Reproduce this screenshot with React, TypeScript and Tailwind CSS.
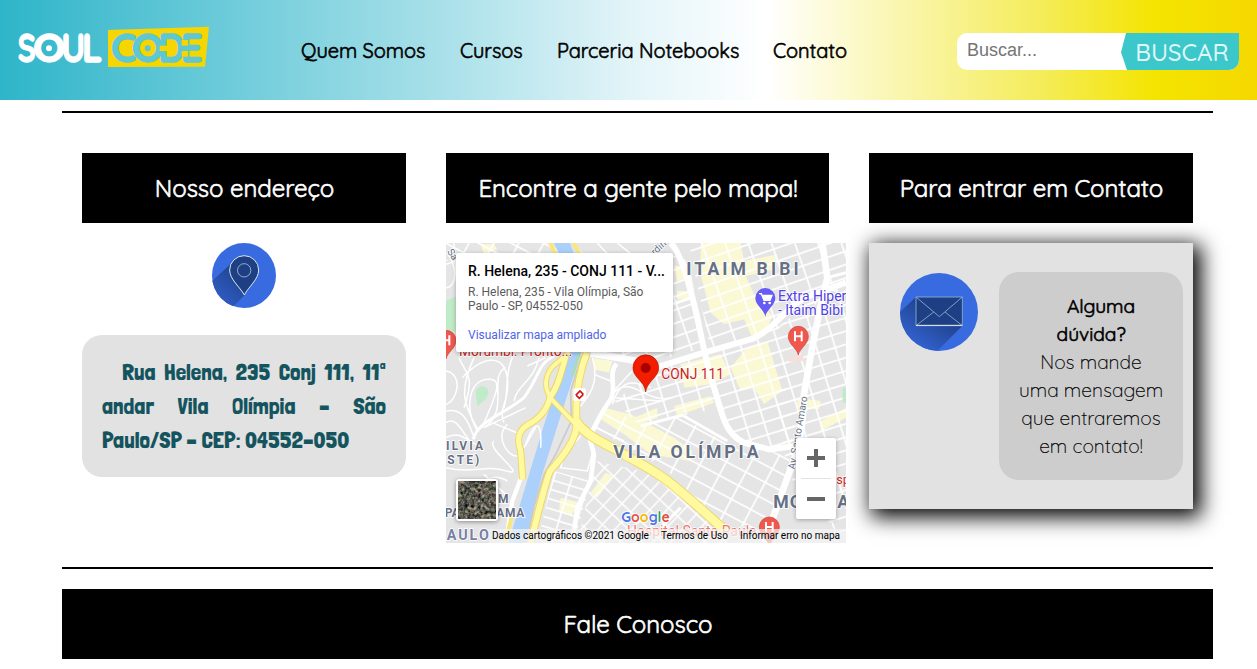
import React from "react";

const quick = "font-['Quicksand','Inter',sans-serif]";
const thick = "font-normal tracking-[-0.06px] [-webkit-text-stroke:0.6px_currentColor]";

function Logo() {
  return (
    <svg className="block h-[54px] w-[200px]" viewBox="0 0 600 162" fontFamily="Quicksand, Inter, sans-serif" fontWeight="700" fontSize="118">
      <g fill="#fff" stroke="#fff" strokeWidth="4">
        <text x="11" y="125" textLength="54" lengthAdjust="spacingAndGlyphs">S</text>
        <text x="57" y="125" textLength="97" lengthAdjust="spacingAndGlyphs">O</text>
        <text x="142" y="125" textLength="72" lengthAdjust="spacingAndGlyphs">U</text>
        <text x="204" y="125" textLength="61" lengthAdjust="spacingAndGlyphs">L</text>
        <circle cx="105" cy="85" r="7" />
      </g>
      <polygon points="282,30 585,20 573,140 282,141" fill="#f6d500" />
      <g fill="#5fc6d4" stroke="#5fc6d4" strokeWidth="4">
        <text x="291" y="125" textLength="76" lengthAdjust="spacingAndGlyphs">C</text>
        <text x="353" y="125" textLength="96" lengthAdjust="spacingAndGlyphs">O</text>
        <text x="433" y="125" textLength="80" lengthAdjust="spacingAndGlyphs">D</text>
        <text x="500" y="125" textLength="66" lengthAdjust="spacingAndGlyphs">E</text>
        <circle cx="401" cy="85" r="7" />
      </g>
      <g fill="#f6d500">
        <rect x="437" y="77" width="22" height="16" />
        <rect x="503" y="60" width="19" height="17" />
        <rect x="503" y="93" width="19" height="17" />
      </g>
    </svg>
  );
}

function PinIcon() {
  return (
    <svg className="block h-[65px] w-[64px]" viewBox="0 0 192 195">
      <defs>
        <clipPath id="pinClip"><ellipse cx="96" cy="97.5" rx="96" ry="97.5" /></clipPath>
        <linearGradient id="pinShade" gradientUnits="userSpaceOnUse" x1="105" y1="75" x2="30" y2="160">
          <stop offset="0" stopColor="#1f3f84" /><stop offset="1" stopColor="#2d59bd" />
        </linearGradient>
      </defs>
      <g clipPath="url(#pinClip)">
        <rect width="192" height="195" fill="#386ae0" />
        <path d="M62 58L-20 132L40 215L97 157L130 110V70Z" fill="url(#pinShade)" />
        <path d="M97 156C84 132 53 109 53 81A43.500 43 0 0 1 140 81C140 109 109 132 97 156Z" fill="#1f3f84" stroke="#d7e9ef" strokeWidth="3" />
        <circle cx="96.500" cy="82" r="20" fill="none" stroke="#a6c3dc" strokeWidth="2.500" />
      </g>
    </svg>
  );
}

function MailIcon() {
  return (
    <svg className="block size-[78px]" viewBox="0 0 234 234">
      <defs>
        <clipPath id="mailClip"><circle cx="117" cy="117" r="117" /></clipPath>
        <linearGradient id="mailShade" gradientUnits="userSpaceOnUse" x1="130" y1="110" x2="60" y2="215">
          <stop offset="0" stopColor="#1f3f84" /><stop offset="1" stopColor="#3160cc" />
        </linearGradient>
      </defs>
      <g clipPath="url(#mailClip)">
        <rect width="234" height="234" fill="#386ae0" />
        <path d="M48 72L-10 126V240H106L187 158V72Z" fill="url(#mailShade)" />
        <rect x="48" y="72" width="139" height="86" fill="#1f3f84" />
        <g fill="none" stroke="#8eb4d6" strokeWidth="2.500">
          <path d="M48 72H187V158H48ZM48 72L118 131L187 72M48 158L101 117M187 158L135 117" />
          <path d="M48 157H187" stroke="#e0eef2" strokeWidth="3" />
        </g>
      </g>
    </svg>
  );
}

function HospitalPin({ x, y }: { x: number; y: number }) {
  return (
    <g transform={`translate(${x} ${y})`}>
      <path d="M0 56C-4 36-30 24-30 0A30 30 0 0 1 30 0C30 24 4 36 0 56Z" fill="#f0584e" stroke="#cf3a32" strokeWidth="2" />
      <path d="M-10-15V15M10-15V15M-10 0H10" fill="none" stroke="#fff" strokeWidth="6" />
    </g>
  );
}

const highways = [
  { d: "M376 332L340 365C312 385 302 415 308 445L318 470L352 505L400 555", w: 12 },
  { d: "M366 345C350 395 345 430 318 470C308 510 285 535 250 552C222 570 218 595 230 630L236 715", w: 16 },
  { d: "M428 335C410 385 397 440 397 500V560C392 600 350 655 318 690C302 730 288 790 260 906", w: 18 },
  { d: "M397 540C420 580 475 605 520 628C580 665 640 690 690 735C745 780 790 820 850 875", w: 25 },
];

function MapDrawing() {
  return (
    <svg className="block h-[300px] w-[400px]" viewBox="6 6 1200 900" fontFamily="Roboto, sans-serif">
      <defs>
        <pattern id="gridEast" width="54" height="38" patternUnits="userSpaceOnUse" patternTransform="rotate(-17)">
          <path d="M0 3H54M3 0V38" stroke="#fff" strokeWidth="5" />
        </pattern>
        <pattern id="gridNorth" width="66" height="38" patternUnits="userSpaceOnUse" patternTransform="rotate(-19)">
          <path d="M0 3H66M3 0V38" stroke="#fff" strokeWidth="5" />
        </pattern>
        <pattern id="gridSouth" width="43" height="37" patternUnits="userSpaceOnUse" patternTransform="rotate(-47)">
          <path d="M0 3H43M3 0V37" stroke="#fff" strokeWidth="4.500" />
        </pattern>
        <pattern id="gridMid" width="66" height="46" patternUnits="userSpaceOnUse" patternTransform="rotate(28)">
          <path d="M0 3H66M3 0V46" stroke="#fff" strokeWidth="5" />
        </pattern>
        <pattern id="gridWest" width="52" height="28" patternUnits="userSpaceOnUse" patternTransform="rotate(17)">
          <path d="M0 3H52M3 0V28" stroke="#fff" strokeWidth="5" />
        </pattern>
      </defs>
      <rect x="6" y="6" width="1200" height="900" fill="#e5e5e5" />

      <g fill="#fbf8d4">
        <path d="M770 6H890L900 60L1000 40L990 85L905 105L930 160L985 225L960 282L925 290L900 235L840 250L800 215L770 100Z" />
        <path d="M690 75H735V110L700 120ZM700 150H735V175H700Z" />
        <path d="M905 325L970 300L1015 450L960 490L930 440L890 450L860 380ZM710 370L830 340L860 400L800 430L720 440Z" />
        <path d="M690 495L800 465L810 485L700 525ZM480 500L560 520L690 590L745 630L740 660L620 640L540 580L470 535ZM570 530L640 500V530L590 550Z" />
        <path d="M1060 470L1130 480L1125 505L1060 500ZM1130 540L1206 500V530L1130 570Z" />
        <path d="M450 352L505 360L495 395L450 385ZM350 770L410 785L380 825L345 810ZM485 695L508 705L460 770L440 755ZM120 40L160 25L150 10H110Z" />
      </g>
      <g>
        <polygon points="735,6 1206,6 1206,130 970,285 800,330" fill="url(#gridNorth)" />
        <polygon points="680,40 735,60 780,320 600,370 445,340 560,250" fill="url(#gridNorth)" />
        <polygon points="650,380 970,290 1030,450 1070,650 920,610 850,570 780,340 820,500 590,555 510,480" fill="url(#gridEast)" />
        <polygon points="970,280 1206,110 1206,906 1030,700" fill="url(#gridEast)" />
        <polygon points="490,490 580,550 710,525 850,610 980,630 1040,650 970,870 840,850 660,680 450,560" fill="url(#gridMid)" />
        <polygon points="455,660 640,700 850,880 850,906 400,906" fill="url(#gridSouth)" />
        <polygon points="330,690 440,720 390,906 280,906" fill="url(#gridWest)" />
        <polygon points="6,6 345,6 350,40 6,60" fill="url(#gridMid)" />
      </g>
      <path d="M6 180L38 165V270L6 275ZM95 450C105 430 130 430 134 455L125 475L100 495ZM1196 440H1206V485H1196Z" fill="#c0ebc8" />
      <path d="M1035 350L1080 340L1075 360L1035 362Z" fill="#f8dedb" />
      <path d="M330 6H378L390 40H345ZM376 330H413L345 540L293 705L243 906H192L210 850L302 545Z" fill="#aad0fb" />
      <path d="M410 335L390 405H381L402 335Z" fill="#a5dfb3" />
      <path d="M412 345L380 450L382 540L335 640L300 700L272 790L246 906" fill="none" stroke="#cbcbcb" strokeWidth="5" />

      <g fill="none" stroke="#fff" strokeWidth="4.500">
        <path d="M6 390C60 400 40 480 6 490M45 350C65 400 95 400 60 500M55 410C120 340 180 340 190 410S160 500 180 545M90 350C50 440 50 480 105 570M100 570C60 500 75 420 130 415S150 470 115 560M120 560C200 510 130 405 185 380M205 350C180 405 195 455 180 500M285 350C270 420 220 430 210 480M250 375L305 350M6 510C50 500 70 530 90 590M6 545C40 520 60 590 88 610M6 590C40 570 60 590 95 610M120 560L245 500M145 545L230 580M6 680C90 700 120 670 188 690S120 620 150 600M190 550C150 590 195 650 220 645M120 700L185 760M245 610C270 540 295 530 290 620M275 560L240 620M60 740C120 730 140 690 190 720" />
        <path d="M8 35C40 70 40 140 6 140M6 70L38 60M30 6L38 130M390 10L435 60M460 6L490 38M520 6L560 38" />
        <path d="M445 350C470 430 430 470 405 500M450 400L500 420M460 330L590 355M500 460L565 390M505 490C530 410 570 420 620 440M515 470L650 480M510 455C560 400 610 490 680 470M455 560L540 600M410 585L360 640L350 680L430 690L450 620" />
      </g>
      <g fill="none" stroke="#fff">
        <path d="M88 595C100 540 180 520 240 470C290 400 280 370 330 345" strokeWidth="9" />
        <path d="M680 6C705 30 725 90 745 170C770 260 780 350 810 440C835 520 840 575 900 605L975 625L1056 615" strokeWidth="18" />
        <path d="M440 338L560 358L640 378L780 335L930 292C980 270 1020 210 1080 170L1206 125" strokeWidth="18" />
        <path d="M1135 6L1150 110C1120 230 1100 340 1080 460C1080 570 1055 650 1030 710L960 906" strokeWidth="20" />
        <path d="M518 368C490 400 520 440 500 475C460 530 455 560 435 585L450 640L440 720L400 800L385 906" strokeWidth="14" />
        <path d="M1150 110L1206 95M590 555L715 522L850 600M745 170L620 210M845 870L720 770M650 860L710 800" strokeWidth="9" />
        <path d="M235 700L205 780L185 906" strokeWidth="13" />
      </g>
      {highways.map((h) => <path key={h.d} d={h.d} fill="none" stroke="#f0d45c" strokeWidth={h.w + 5} />)}
      {highways.map((h) => <path key={h.d} d={h.d} fill="none" stroke="#fffaa0" strokeWidth={h.w} />)}
      <path d="M318 6L338 45M388 6L408 40M205 820L183 906" stroke="#f8e87b" strokeWidth="12" />

      <g fill="#667085" stroke="#fff" strokeWidth="5" paintOrder="stroke" fontWeight="700">
        <text x="727" y="102" fontSize="53" textLength="337">ITAIM BIBI</text>
        <text x="508" y="652" fontSize="53" textLength="436">VILA OLÍMPIA</text>
        <text x="988" y="801" fontSize="53" letterSpacing="3">MO</text>
        <text x="1180" y="801" fontSize="53">A</text>
        <g fontSize="36">
          <text x="6" y="628" textLength="111">ILVIA</text>
          <text x="10" y="669" textLength="96">STE)</text>
          <text x="162" y="787">M</text>
          <text x="2" y="827">PA</text>
          <text x="157" y="827" textLength="84">AMA</text>
        </g>
        <text x="8" y="898" fontSize="43" letterSpacing="6" fill="#7980a3">AULO</text>
      </g>
      <g fill="#667085" stroke="#fff" strokeWidth="4" paintOrder="stroke" fontSize="30">
        <text transform="translate(1052 686) rotate(-80)" textLength="222">Av. Santo Amaro</text>
        <text transform="translate(8 32) rotate(55)">Sá</text>
        <text transform="translate(632 44) rotate(-42)">rdin</text>
      </g>
      <g stroke="#fff" strokeWidth="4" paintOrder="stroke" fontSize="42">
        <g fill="#cb2323">
          <text x="45" y="346" textLength="340" lengthAdjust="spacingAndGlyphs">Morumbi: Pronto...</text>
          <text x="652" y="414" textLength="188" lengthAdjust="spacingAndGlyphs">CONJ 111</text>
          <text x="1177" y="730" fontSize="38">sp</text>
          <text x="549" y="886" textLength="389" lengthAdjust="spacingAndGlyphs" fill="#ed7770">Hospital Santa Paula</text>
        </g>
        <g fill="#5040e5">
          <text x="1002" y="180" textLength="205" lengthAdjust="spacingAndGlyphs">Extra Hiper</text>
          <text x="1002" y="222" textLength="196" lengthAdjust="spacingAndGlyphs">- Itaim Bibi</text>
        </g>
      </g>
      <HospitalPin x={1063} y={286} />
      <HospitalPin x={6} y={298} />
      <HospitalPin x={976} y={858} />
      <path d="M964 227C960 205 934 193 934 171A30 30 0 0 1 994 171C994 193 968 205 964 227Z" fill="#665cf5" />
      <path d="M945 158H952L960 178H978L984 163H955" fill="#fff" stroke="#fff" strokeWidth="4" />
      <circle cx="961" cy="186" r="4" fill="#fff" /><circle cx="977" cy="186" r="4" fill="#fff" />
      <path d="M605 453C602 420 567 410 567 380A38.500 38.500 0 0 1 644 380C644 410 609 420 605 453Z" fill="#f31d00" stroke="#bd1000" strokeWidth="2" />
      <circle cx="605" cy="381" r="15" fill="#a90000" />
      <rect x="388" y="442" width="38" height="38" rx="5" fill="#fff" />
      <path d="M395 463L408 450L418 460M418 460L406 472L397 463" fill="none" stroke="#d4141a" strokeWidth="5" />
      <g fontSize="44" fontWeight="700" stroke="#fff" strokeWidth="5" paintOrder="stroke" fontFamily="Quicksand, Inter, sans-serif">
        <text x="532" y="844" textLength="145" lengthAdjust="spacingAndGlyphs">
          <tspan fill="#4e75e8">G</tspan><tspan fill="#e64e43">o</tspan><tspan fill="#f4b400">o</tspan><tspan fill="#4e75e8">g</tspan><tspan fill="#2ba75b">l</tspan><tspan fill="#e64e43">e</tspan>
        </text>
      </g>
    </svg>
  );
}

function MapEmbed() {
  return (
    <div className="relative h-[300px] w-[400px] overflow-hidden font-['Roboto',sans-serif]">
      <MapDrawing />
      <div className="absolute top-[10px] left-[10px] h-[99px] w-[217px] rounded-[2px] bg-white pt-[9px] pl-3 shadow-[0_1px_4px_rgba(0,0,0,.3)]">
        <p className="text-sm leading-[18px] font-medium whitespace-nowrap text-black">R. Helena, 235 - CONJ 111 - V...</p>
        <p className="mt-[5px] text-xs leading-[14px] text-[#5b5b5b]">R. Helena, 235 - Vila Olímpia, São<br />Paulo - SP, 04552-050</p>
        <p className="mt-[15px] text-xs leading-[14px] text-[#4f65e8]">Visualizar mapa ampliado</p>
      </div>
      <div className="absolute top-[195px] left-[350px] flex h-[81px] w-10 rounded-[2px] bg-white shadow-[0_1px_4px_rgba(0,0,0,.3)]">
        <svg className="h-full w-full" viewBox="0 0 40 81">
          <path d="M11 20H29M20 11V29M11 61H29" stroke="#666" strokeWidth="4" />
          <path d="M5 40.500H35" stroke="#e3e3e3" />
        </svg>
      </div>
      <div className="absolute top-[236px] left-[10px] size-[42px] rounded-[3px] border-2 border-white bg-[#465148] shadow-[0_1px_4px_rgba(0,0,0,.4)]">
        <svg className="h-full w-full" viewBox="0 0 38 38">
          <filter id="terrain" x="0" y="0" width="100%" height="100%" colorInterpolationFilters="sRGB">
            <feTurbulence type="fractalNoise" baseFrequency=".3" numOctaves="4" seed="8" />
            <feColorMatrix values=".9 .5 0 0 -.33  .6 .7 0 0 -.29  .6 .5 .2 0 -.33  0 0 0 0 1" />
          </filter>
          <rect width="38" height="38" filter="url(#terrain)" />
          <path d="M0 29L10 12L14 0M9 12L5 38" stroke="#303c35" fill="none" opacity=".8" />
        </svg>
      </div>
      <div className="absolute right-0 bottom-0 flex h-[14px] w-[357px] justify-between bg-[#f5f5f5]/70 pr-[6px] pl-[3px] text-[10px] leading-[14px] whitespace-nowrap text-black">
        <span>Dados cartográficos ©2021 Google</span>
        <span>Termos de Uso</span>
        <span>Informar erro no mapa</span>
      </div>
    </div>
  );
}

function Title({ children }: { children: React.ReactNode }) {
  return <h2 className={`${quick} ${thick} flex h-[70px] items-center justify-center bg-black pl-px text-2xl whitespace-nowrap text-white`}>{children}</h2>;
}

export default function App() {
  return (
    <div className="h-[669px] w-full overflow-hidden bg-white">
      <header className="flex h-[100px] items-start bg-[linear-gradient(to_right,#2eb5c9_0%,#a8e0e9_35%,#e2f4f8_50%,#ffffff_61%,#f4ec58_83%,#f4e400_92%,#f5d800_100%)] pl-[14px]">
        <div className="mt-5 w-[287px]"><Logo /></div>
        <nav className={`${quick} ${thick} mt-[36px] flex text-xl leading-[30px] whitespace-nowrap text-black`}>
          <a className="w-[159px]">Quem Somos</a>
          <a className="w-[97px]">Cursos</a>
          <a className="w-[216px]">Parceria Notebooks</a>
          <a className="w-[184px]">Contato</a>
        </nav>
        <div className="mt-[33px] flex h-[37px] w-[282px] justify-between overflow-hidden rounded-[10px] rounded-tr-none bg-white">
          <span className="pl-[10px] font-['Liberation_Sans',sans-serif] text-[18px] leading-[34px] text-[#757575]">Buscar...</span>
          <div className={`${quick} flex w-[118px] items-center justify-center bg-[#3cc7cb] pt-px pl-1 text-[24px] font-medium text-[#dff6f6] [clip-path:polygon(5px_0,100%_0,100%_100%,6px_100%,0_52%)]`}>BUSCAR</div>
        </div>
      </header>

      <main className="mt-[11px] ml-[62px] w-[1151px]">
        <div className="h-[2px] bg-black" />
        <div className="mt-10 flex h-[414px] gap-10 px-5">
          <section className="w-[324px]">
            <Title>Nosso endereço</Title>
            <div className="mt-5 flex justify-center"><PinIcon /></div>
            <div className="mt-[27px] h-[142px] rounded-[20px] bg-[#e2e2e2] px-5 pt-5 font-['Londrina_Solid','Liberation_Sans_Narrow','Roboto',sans-serif] text-[23.3px] leading-[34px] font-normal text-[#14545e] [-webkit-text-stroke:0.1px_#14545e]">
              <p className="flex justify-between whitespace-nowrap pl-5"><span>Rua</span> <span>Helena,</span> <span>235</span> <span>Conj</span> <span>111,</span> <span>11ª</span></p>
              <p className="flex justify-between whitespace-nowrap"><span>andar</span> <span>Vila</span> <span>Olímpia</span> <span>–</span> <span>São</span></p>
              <p className="whitespace-nowrap">Paulo/SP – CEP: 04552–050</p>
            </div>
          </section>
          <section className="w-[383px]">
            <Title>Encontre a gente pelo mapa!</Title>
            <div className="mt-5"><MapEmbed /></div>
          </section>
          <section className="w-[324px]">
            <Title>Para entrar em Contato</Title>
            <div className="mt-5 flex h-[266px] items-start bg-[#e2e2e2] pt-[29px] pl-[31px] shadow-[5px_5px_20px_3px_#000]">
              <div className="mt-px w-[99px]"><MailIcon /></div>
              <div className={`${quick} h-[208px] w-[184px] rounded-[20px] bg-[#cdcdcd] pt-5 text-center text-[19.2px] leading-7 font-light whitespace-nowrap text-black [-webkit-text-stroke:0.15px_currentColor]`}>
                <p className={`${thick} pl-5`}>Alguma</p>
                <p className={thick}>dúvida?</p>
                <p>Nos mande</p>
                <p>uma mensagem</p>
                <p>que entraremos</p>
                <p>em contato!</p>
              </div>
            </div>
          </section>
        </div>
        <div className="h-[2px] bg-black" />
        <div className="mt-5"><Title>Fale Conosco</Title></div>
      </main>
    </div>
  );
}
